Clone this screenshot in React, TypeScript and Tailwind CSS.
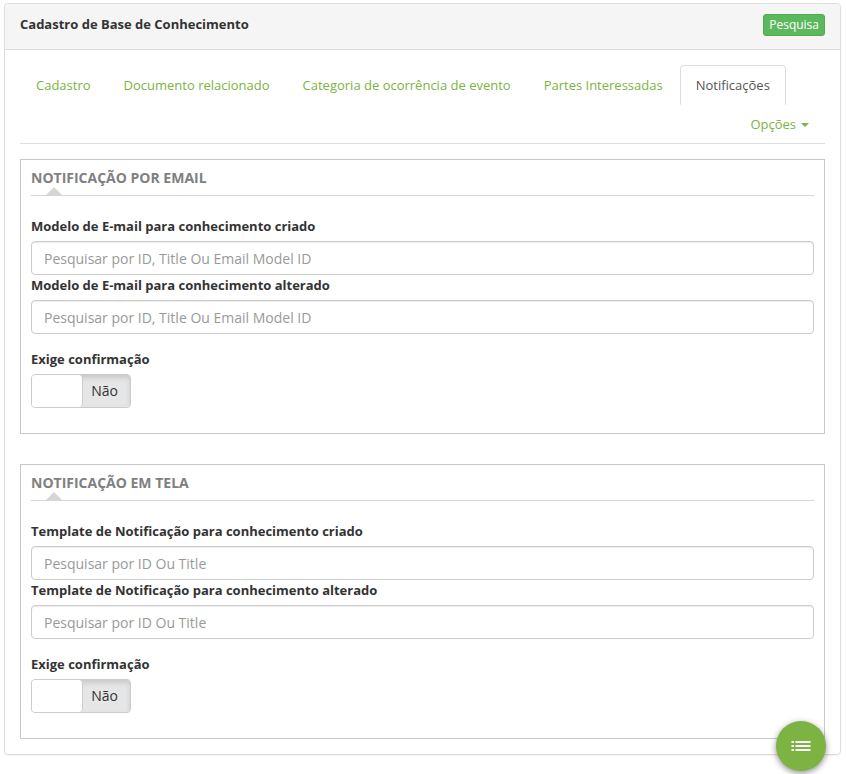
import { useId, useState } from "react";

const tabs = [
  "Cadastro",
  "Documento relacionado",
  "Categoria de ocorrência de evento",
  "Partes Interessadas",
  "Notificações",
];

function SearchField({ label, placeholder }: { label: string; placeholder: string }) {
  const id = useId();
  return (
    <div>
      <label htmlFor={id} className="mb-[5px] block text-[13px] leading-5 font-bold text-[#333333]">
        {label}
      </label>
      <input
        id={id}
        type="text"
        placeholder={placeholder}
        className="block h-[34px] w-full rounded border border-[#cccccc] bg-white px-3 text-sm text-[#555555] shadow-[inset_0_1px_1px_rgba(0,0,0,0.075)] outline-none placeholder:text-[#999999] focus:border-[#7cb342]"
      />
    </div>
  );
}

function ConfirmSwitch({ label }: { label: string }) {
  const id = useId();
  const [on, setOn] = useState(false);
  return (
    <div className="mt-[15px]">
      <label htmlFor={id} className="mb-[5px] block text-[13px] leading-5 font-bold text-[#333333]">
        {label}
      </label>
      <label className="relative flex h-[34px] w-[100px] cursor-pointer overflow-hidden rounded border border-[#cccccc] text-sm">
        <input
          id={id}
          type="checkbox"
          checked={on}
          onChange={(e) => setOn(e.target.checked)}
          className="absolute inset-0 cursor-pointer opacity-0"
        />
        {on ? (
          <>
            <span className="flex flex-1 items-center justify-center bg-[#7cb342] text-white">Sim</span>
            <span className="w-[51px] rounded-l border-l border-[#cccccc] bg-white" />
          </>
        ) : (
          <span className="flex flex-1 bg-[#e6e6e6] shadow-[inset_0_3px_5px_rgba(0,0,0,0.125)]">
            <span className="w-[51px] rounded-r border-r border-[#cccccc] bg-white" />
            <span className="flex flex-1 items-center justify-center pr-1 text-[#333333]">Não</span>
          </span>
        )}
      </label>
    </div>
  );
}

function Section({ title, fields, placeholder }: { title: string; fields: string[]; placeholder: string }) {
  return (
    <section className="border border-[#c8c8c8] px-[10px] pb-[25px]">
      <h2 className="relative mb-5 border-b border-[#d6d6d6] pt-2 pb-[7px] text-sm leading-5 font-bold text-[#808080] uppercase">
        {title}
        <span className="absolute bottom-0 left-[15px] border-x-8 border-b-8 border-x-transparent border-b-[#d6d6d6]" />
      </h2>
      {fields.map((f) => (
        <SearchField key={f} label={f} placeholder={placeholder} />
      ))}
      <ConfirmSwitch label="Exige confirmação" />
    </section>
  );
}

export default function App() {
  const [active, setActive] = useState("Notificações");
  return (
    <div className="min-h-screen bg-white pt-[3px] pr-[5px] pb-[19px] pl-1 font-['Open_Sans',sans-serif] text-[13px] text-[#333333]">
      <main className="rounded border border-[#dddddd] shadow-[0_1px_1px_rgba(0,0,0,0.05)]">
        <header className="flex items-start justify-between rounded-t border-b border-[#dddddd] bg-[#f5f5f5] px-[15px] py-[10px]">
          <h1 className="leading-5 font-bold">Cadastro de Base de Conhecimento</h1>
          <button
            type="button"
            className="mb-[3px] h-[22px] rounded-[3px] border border-[#4cae4c] bg-[#5cb85c] px-[5px] text-xs leading-5 text-white"
          >
            Pesquisa
          </button>
        </header>

        <div className="p-[15px]">
          <nav className="mb-[15px] flex flex-wrap gap-x-px border-b border-[#dddddd]">
            {tabs.map((t) => (
              <a
                key={t}
                href="#"
                onClick={(e) => {
                  e.preventDefault();
                  setActive(t);
                }}
                aria-current={t === active ? "page" : undefined}
                className={
                  t === active
                    ? "-mb-px rounded-t border border-[#dddddd] border-b-transparent bg-white px-[15px] py-[10px] leading-[18px] text-[#555555]"
                    : "-mb-px rounded-t border border-transparent px-[15px] py-[10px] leading-[18px] text-[#7cb342]"
                }
              >
                {t}
              </a>
            ))}
            <button
              type="button"
              aria-haspopup="menu"
              className="-mb-px ml-auto flex items-center gap-[5px] border border-transparent px-[15px] py-[10px] leading-[18px] text-[#7cb342]"
            >
              Opções
              <span className="mt-[2px] border-x-4 border-t-4 border-x-transparent border-t-[#7cb342]" />
            </button>
          </nav>

          <div className="flex flex-col gap-[30px]">
            <Section
              title="Notificação por email"
              fields={["Modelo de E-mail para conhecimento criado", "Modelo de E-mail para conhecimento alterado"]}
              placeholder="Pesquisar por ID, Title Ou Email Model ID"
            />
            <Section
              title="Notificação em tela"
              fields={[
                "Template de Notificação para conhecimento criado",
                "Template de Notificação para conhecimento alterado",
              ]}
              placeholder="Pesquisar por ID Ou Title"
            />
          </div>
        </div>
      </main>

      <button
        type="button"
        aria-label="Menu"
        className="fixed right-5 bottom-[3px] flex size-[50px] items-center justify-center rounded-full bg-[#7cb342] shadow-[0_2px_6px_rgba(0,0,0,0.45)]"
      >
        <svg width="20" height="10" viewBox="0 0 20 10" fill="#ffffff" aria-hidden="true">
          <path d="M0.5 0H3v2H0.5zM4.5 0h15v2h-15zM0.5 4H3v2H0.5zM4.5 4h15v2h-15zM0.5 8H3v2H0.5zM4.5 8h15v2h-15z" />
        </svg>
      </button>
    </div>
  );
}
